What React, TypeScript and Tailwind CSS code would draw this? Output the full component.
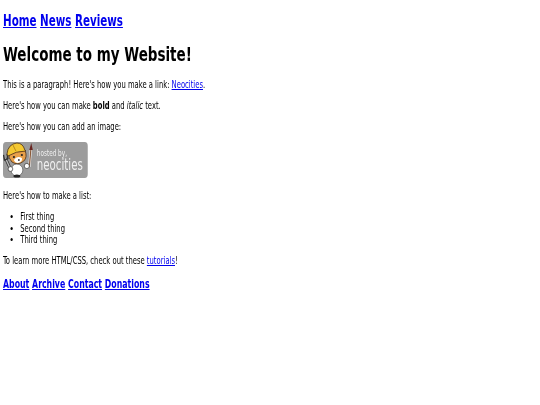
// Neocities starter page, squeezed sideways like the source capture
function Badge() {
  return (
    <div className="w-[113px] h-[36px] rounded-[4px] bg-[#9c9c9c] flex items-center overflow-hidden">
      <svg viewBox="0 0 34 36" preserveAspectRatio="none" className="w-[45px] h-[36px] shrink-0">
        {/* wrench */}
        <path d="M2.5 16 L7 26" stroke="#333" strokeWidth="3" />
        <path d="M2.5 16 L7 26" stroke="#bbb" strokeWidth="1.4" />
        <path d="M0.5 13 L1.5 18 L5 16.5 L4 12" fill="none" stroke="#333" strokeWidth="1.3" />
        {/* brush */}
        <path d="M28 8 L26.5 25" stroke="#eee" strokeWidth="2.4" />
        <path d="M28 8 L26.5 25" stroke="#8a5a3a" strokeWidth="1.2" />
        <path d="M28.5 1 L30 8 L26.5 8 Z" fill="#6a2622" />
        {/* body */}
        <ellipse cx="14" cy="28" rx="6" ry="6" fill="#fff" stroke="#444" strokeWidth="0.6" />
        <circle cx="7.5" cy="27" r="2.4" fill="#fff" stroke="#333" strokeWidth="0.7" />
        <circle cx="24" cy="24" r="2.6" fill="#fff" stroke="#333" strokeWidth="0.7" />
        <ellipse cx="14" cy="34" rx="3.5" ry="1.6" fill="#222" />
        {/* head */}
        <path d="M6 11 L22 8 Q25 15 21 19 Q15 24 9 20 Q5 16 6 11 Z" fill="#e8a04a" stroke="#4a3018" strokeWidth="0.8" />
        <path d="M11 18 Q14 13 19 16 Q20 20 15 21 Q12 21 11 18 Z" fill="#fff" />
        {/* helmet */}
        <path d="M4 12 Q5 2 14 1 Q20 1 22 8 L23 9 Q13 9 5 14 Z" fill="#f4c832" stroke="#4a3018" strokeWidth="0.8" />
        <path d="M10 3 L13 9" stroke="#b88a1a" strokeWidth="1" />
        <circle cx="11" cy="15" r="1.1" fill="#222" />
        <circle cx="19" cy="13" r="1.1" fill="#222" />
        <circle cx="16" cy="18" r="0.9" fill="#333" />
      </svg>
      <div className="flex flex-col text-[#f0f0f0]">
        <span className="text-[8.5px] leading-[10px]">hosted by,</span>
        <span className="text-[15.2px] leading-[15px]">neocities</span>
      </div>
    </div>
  );
}

function NavLinks({ items, className }: { items: string[]; className: string }) {
  return (
    <div className={`font-bold text-[#0000ee] ${className}`}>
      {items.map((item, i) => (
        <span key={item}>
          <a href="#" className="underline">{item}</a>
          {i < items.length - 1 ? ' ' : ''}
        </span>
      ))}
    </div>
  );
}

export default function App() {
  return (
    <div className="w-[540px] h-[405px] bg-white overflow-hidden">
      <div className="w-[720px] h-[405px] origin-top-left scale-x-75 blur-[0.35px] text-black px-[4px] text-[10.1px] leading-[12px] font-['DejaVu_Sans_Condensed','DejaVu_Sans',sans-serif]">
        <NavLinks items={['Home', 'News', 'Reviews']} className="text-[15.3px] leading-[18px] pt-[12px]" />
        <h1 className="text-[20px] leading-[24px] font-bold mt-[12px]">Welcome to my Website!</h1>
        <p className="mt-[13px]">
          This is a paragraph! Here's how you make a link: <a href="#" className="text-[#0000ee] underline">Neocities</a>.
        </p>
        <p className="mt-[9px]">
          Here's how you can make <b>bold</b> and <i>italic</i> text.
        </p>
        <p className="mt-[9px]">Here's how you can add an image:</p>
        <div className="mt-[9px]"><Badge /></div>
        <p className="mt-[12px]">Here's how to make a list:</p>
        <ul className="mt-[9px] pl-[23px] list-disc">
          <li className="leading-[11.5px]">First thing</li>
          <li className="leading-[11.5px]">Second thing</li>
          <li className="leading-[11.5px]">Third thing</li>
        </ul>
        <p className="mt-[9px]">
          To learn more HTML/CSS, check out these <a href="#" className="text-[#0000ee] underline">tutorials</a>!
        </p>
        <NavLinks items={['About', 'Archive', 'Contact', 'Donations']} className="text-[11.6px] leading-[14px] mt-[10px]" />
      </div>
    </div>
  );
}
